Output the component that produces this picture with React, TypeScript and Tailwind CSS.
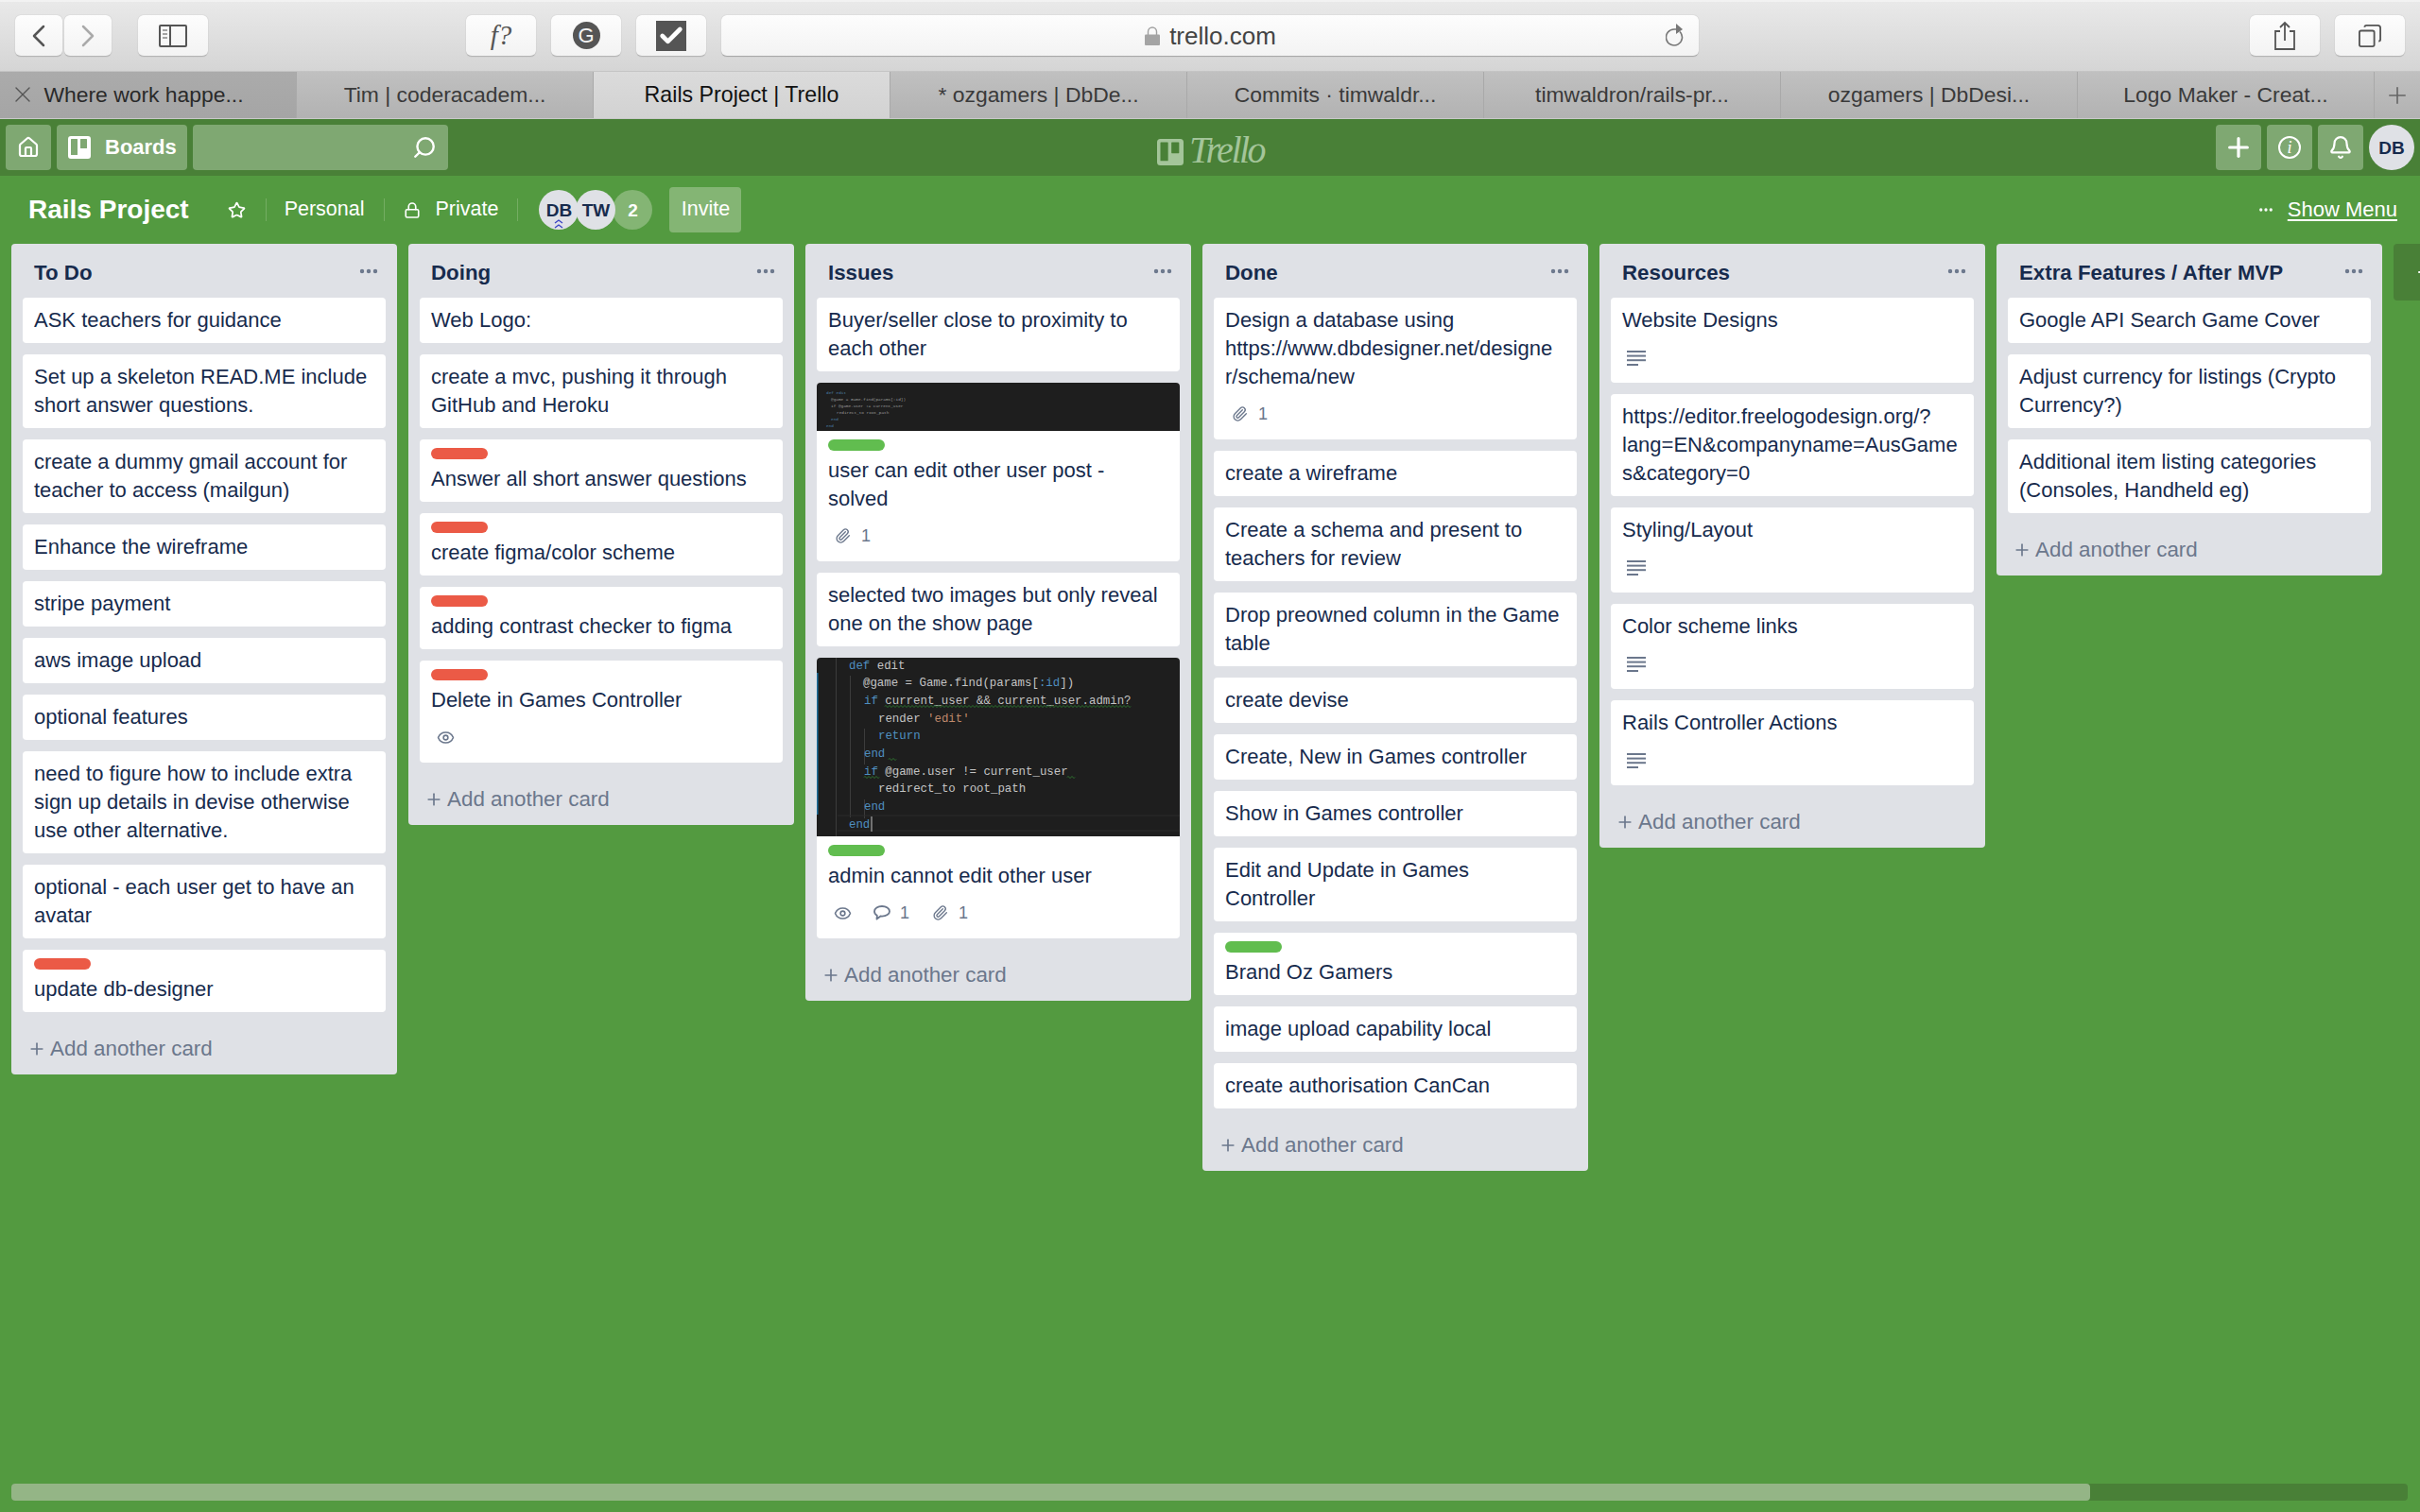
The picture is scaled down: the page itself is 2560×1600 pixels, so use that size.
import type { ReactNode } from "react";
import { Home, Search, Star, Lock, Plus, Bell, Eye, Paperclip, ChevronLeft, ChevronRight, Check, Ellipsis, X } from "lucide-react";

type CardData = {
  text: string;
  label?: "red" | "green";
  image?: "small" | "big";
  watch?: boolean;
  comments?: number;
  clips?: number;
  desc?: boolean;
};

const lists: { title: string; cards: CardData[] }[] = [
  {
    title: "To Do",
    cards: [
      { text: "ASK teachers for guidance" },
      { text: "Set up a skeleton READ.ME include short answer questions." },
      { text: "create a dummy gmail account for teacher to access (mailgun)" },
      { text: "Enhance the wireframe" },
      { text: "stripe payment" },
      { text: "aws image upload" },
      { text: "optional features" },
      { text: "need to figure how to include extra sign up details in devise otherwise use other alternative." },
      { text: "optional - each user get to have an avatar" },
      { text: "update db-designer", label: "red" },
    ],
  },
  {
    title: "Doing",
    cards: [
      { text: "Web Logo:" },
      { text: "create a mvc, pushing it through GitHub and Heroku" },
      { text: "Answer all short answer questions", label: "red" },
      { text: "create figma/color scheme", label: "red" },
      { text: "adding contrast checker to figma", label: "red" },
      { text: "Delete in Games Controller", label: "red", watch: true },
    ],
  },
  {
    title: "Issues",
    cards: [
      { text: "Buyer/seller close to proximity to each other" },
      { text: "user can edit other user post - solved", label: "green", image: "small", clips: 1 },
      { text: "selected two images but only reveal one on the show page" },
      { text: "admin cannot edit other user", label: "green", image: "big", watch: true, comments: 1, clips: 1 },
    ],
  },
  {
    title: "Done",
    cards: [
      { text: "Design a database using\nhttps://www.dbdesigner.net/designe\nr/schema/new", clips: 1 },
      { text: "create a wireframe" },
      { text: "Create a schema and present to teachers for review" },
      { text: "Drop preowned column in the Game table" },
      { text: "create devise" },
      { text: "Create, New in Games controller" },
      { text: "Show in Games controller" },
      { text: "Edit and Update in Games\nController" },
      { text: "Brand Oz Gamers", label: "green" },
      { text: "image upload capability local" },
      { text: "create authorisation CanCan" },
    ],
  },
  {
    title: "Resources",
    cards: [
      { text: "Website Designs", desc: true },
      { text: "https://editor.freelogodesign.org/?lang=EN&companyname=AusGames&category=0" },
      { text: "Styling/Layout", desc: true },
      { text: "Color scheme links", desc: true },
      { text: "Rails Controller Actions", desc: true },
    ],
  },
  {
    title: "Extra Features / After MVP",
    cards: [
      { text: "Google API Search Game Cover" },
      { text: "Adjust currency for listings (Crypto Currency?)" },
      { text: "Additional item listing categories (Consoles, Handheld eg)" },
    ],
  },
];

const tabs = [
  "Where work happe...",
  "Tim | coderacadem...",
  "Rails Project | Trello",
  "* ozgamers | DbDe...",
  "Commits · timwaldr...",
  "timwaldron/rails-pr...",
  "ozgamers | DbDesi...",
  "Logo Maker - Creat...",
];

function ToolButton({ children, className }: { children: ReactNode; className: string }) {
  return (
    <div className={`h-11 flex items-center justify-center rounded-[6px] bg-gradient-to-b from-[#fdfdfd] to-[#f3f3f3] border-b border-b-[#b4b4b4] shadow-[0_0_1px_rgba(0,0,0,0.3)] text-[#555] ${className}`}>
      {children}
    </div>
  );
}

function BoardIcon({ className }: { className: string }) {
  return (
    <svg viewBox="0 0 24 24" className={className}>
      <path fill="currentColor" fillRule="evenodd" d="M3 0h18a3 3 0 0 1 3 3v18a3 3 0 0 1-3 3H3a3 3 0 0 1-3-3V3a3 3 0 0 1 3-3zm.5 3a.5.5 0 0 0-.5.5v16a.5.5 0 0 0 .5.5h6a.5.5 0 0 0 .5-.5v-16a.5.5 0 0 0-.5-.5zm10 0a.5.5 0 0 0-.5.5v9a.5.5 0 0 0 .5.5h6a.5.5 0 0 0 .5-.5v-9a.5.5 0 0 0-.5-.5z" />
    </svg>
  );
}

function BrowserBar() {
  return (
    <div className="h-[75px] flex items-start pt-4 pl-4 pr-4 bg-gradient-to-b from-[#e9e9e9] to-[#d5d5d5] border-t-2 border-t-[#f2f2f2]">
      <ToolButton className="w-[50px] -mt-[2px]">
        <ChevronLeft className="w-10 h-11" strokeWidth={1.5} />
      </ToolButton>
      <ToolButton className="w-[50px] ml-[2px] -mt-[2px]">
        <ChevronRight className="w-10 h-11 text-[#aaa]" strokeWidth={1.5} />
      </ToolButton>
      <ToolButton className="w-[74px] ml-7 -mt-[2px]">
        <svg viewBox="0 0 30 24" className="w-[30px] h-6" fill="none" stroke="#555" strokeWidth="2">
          <rect x="1" y="1" width="28" height="22" rx="1" />
          <path d="M12 1v22" />
          <path d="M4 6h5M4 10h5M4 14h5" strokeWidth="1.6" stroke="#888" />
        </svg>
      </ToolButton>
      <ToolButton className="w-[74px] ml-[273px] -mt-[2px]">
        <span className="font-['Liberation_Serif',serif] italic text-[29px] leading-none text-[#555]">f?</span>
      </ToolButton>
      <ToolButton className="w-[74px] ml-4 -mt-[2px]">
        <span className="w-[29px] h-[29px] rounded-full bg-[#555] text-[#f4f4f4] flex items-center justify-center text-[22px] leading-none">G</span>
      </ToolButton>
      <ToolButton className="w-[74px] ml-4 -mt-[2px]">
        <span className="w-8 h-8 bg-[#555] flex items-center justify-center">
          <Check className="w-7 h-7 text-white" strokeWidth={4} />
        </span>
      </ToolButton>
      <div className="relative h-11 w-[1034px] ml-4 -mt-[2px] flex items-center justify-center rounded-[6px] bg-gradient-to-b from-[#fdfdfd] to-[#f3f3f3] border-b border-b-[#a8a8a8] shadow-[0_0_1px_rgba(0,0,0,0.3)]">
        <svg viewBox="0 0 18 20" className="w-[18px] h-5 mr-[9px]">
          <path d="M4.5 9V5.5a4.5 4.5 0 0 1 9 0V9" fill="none" stroke="#a0a0a0" strokeWidth="1.4" />
          <rect x="1" y="8.5" width="16" height="11.5" rx="1" fill="#a4a4a4" />
        </svg>
        <span className="text-[26px] leading-none text-[#444]">trello.com</span>
        <svg viewBox="0 0 20 26" className="absolute right-[15px] top-2 w-5 h-[26px]" fill="none" stroke="#777" strokeWidth="1.6">
          <path d="M15 9.5a8.5 8.5 0 1 1-6-2.5h3" />
          <path d="M11 1l7 6-7 5z" fill="#777" stroke="none" />
        </svg>
      </div>
      <ToolButton className="w-[74px] ml-auto -mt-[2px]">
        <svg viewBox="0 0 24 32" className="w-6 h-8" fill="none" stroke="#555" strokeWidth="1.8">
          <path d="M7 11H2v19h20V11h-5" />
          <path d="M12 21V2M7 7l5-5 5 5" />
        </svg>
      </ToolButton>
      <ToolButton className="w-[74px] ml-4 -mt-[2px]">
        <svg viewBox="0 0 26 26" className="w-6 h-6" fill="none" stroke="#555" strokeWidth="2">
          <rect x="1" y="7" width="17" height="18" rx="2" />
          <path d="M7 3a2 2 0 0 1 2-2h13a3 3 0 0 1 3 3v13a2 2 0 0 1-2 2" />
        </svg>
      </ToolButton>
    </div>
  );
}

function TabStrip() {
  return (
    <div className="h-[51px] flex border-b border-b-[#c8c8c8] border-t border-t-[#c4c4c4] text-[22.9px] leading-none text-[#3a3a3a]">
      {tabs.map((t, i) => (
        <div
          key={t}
          className={`w-[314px] flex items-center justify-center border-r border-r-[#a9a9a9] ${
            i === 2
              ? "bg-gradient-to-b from-[#dbdbdb] to-[#d2d2d2] text-[#111] text-[23.2px]"
              : i === 0
                ? "relative bg-gradient-to-b from-[#ababab] to-[#a5a5a5] text-[#2a2a2a] pr-[9px]"
                : "bg-gradient-to-b from-[#c0c0c0] to-[#b2b2b2]"
          }`}
        >
          {i === 0 && <X className="absolute left-[9px] top-[10px] w-[30px] h-[28px] text-[#555]" strokeWidth={1.2} />}
          {t}
        </div>
      ))}
      <div className="flex-1 flex items-center justify-center bg-gradient-to-b from-[#c0c0c0] to-[#b2b2b2]">
        <Plus className="w-7 h-7 text-[#666]" strokeWidth={1.4} />
      </div>
    </div>
  );
}

function TrelloHeader() {
  const btn = "h-12 rounded-[4px] bg-[#7fa872] flex items-center justify-center text-white";
  return (
    <div className="relative h-[60px] bg-[#498037] flex items-center pl-[6px] pr-[6px] gap-[6px]">
      <div className={`${btn} w-12`}>
        <Home className="w-6 h-6" strokeWidth={2.2} />
      </div>
      <div className={`${btn} w-[138px] gap-[15px] pl-3 justify-start`}>
        <BoardIcon className="w-6 h-6" />
        <span className="text-[22px] font-bold leading-none">Boards</span>
      </div>
      <div className={`${btn} w-[270px] justify-end pr-[12px]`}>
        <Search className="w-[26px] h-[26px] -scale-x-100" strokeWidth={2.2} />
      </div>
      <div className="absolute left-[1224px] top-[13px] flex items-center text-[#a4c59a]">
        <BoardIcon className="w-7 h-7 mt-1" />
        <span className="font-['Liberation_Serif',serif] italic text-[40px] leading-none ml-[6px] tracking-[-2.5px]">Trello</span>
      </div>
      <div className={`${btn} w-12 ml-auto`}>
        <Plus className="w-8 h-8" strokeWidth={2.4} />
      </div>
      <div className={`${btn} w-12`}>
        <span className="w-6 h-6 rounded-full border-2 border-white flex items-center justify-center font-['Liberation_Serif',serif] italic text-[18px] leading-none">i</span>
      </div>
      <div className={`${btn} w-12`}>
        <Bell className="w-[26px] h-[26px]" strokeWidth={2} />
      </div>
      <div className="w-12 h-12 rounded-full bg-[#dfe1e6] flex items-center justify-center text-[19px] font-bold text-[#172b4d] leading-none">DB</div>
    </div>
  );
}

function Divider() {
  return <div className="w-px h-6 bg-[#74ad62]" />;
}

function BoardHeader() {
  return (
    <div className="h-[72px] flex items-center pl-[30px] pr-6 text-white">
      <span className="text-[28px] font-bold leading-none">Rails Project</span>
      <Star className="w-[19px] h-[19px] ml-[41px]" strokeWidth={2.2} />
      <div className="ml-[21px]"><Divider /></div>
      <span className="text-[21.5px] leading-none ml-[19px]">Personal</span>
      <div className="ml-5"><Divider /></div>
      <Lock className="w-[18px] h-[19px] ml-5" strokeWidth={2.2} />
      <span className="text-[21.5px] leading-none ml-4">Private</span>
      <div className="ml-5"><Divider /></div>
      <div className="relative w-[42px] h-[42px] rounded-full bg-[#dfe1e6] ml-[22px] flex items-center justify-center text-[19px] font-bold text-[#172b4d] leading-none">
        DB
        <svg viewBox="0 0 12 12" className="absolute left-[15px] bottom-0 w-3 h-3" fill="none" stroke="#3a45c4" strokeWidth="1.4">
          <path d="M2 5l4-3 4 3M2 10l4-3 4 3" />
        </svg>
      </div>
      <div className="w-[42px] h-[42px] rounded-full bg-[#dfe1e6] -ml-[3px] flex items-center justify-center text-[19px] font-bold text-[#172b4d] leading-none z-10">TW</div>
      <div className="w-[42px] h-[42px] rounded-full bg-[#84b574] -ml-[3px] flex items-center justify-center text-[19px] font-bold leading-none">2</div>
      <div className="w-[76px] h-12 rounded-[4px] bg-[#84b574] ml-[18px] flex items-center justify-center text-[21.5px] leading-none">Invite</div>
      <Ellipsis className="w-[18px] h-[18px] ml-auto" strokeWidth={2.4} />
      <span className="text-[22px] leading-none underline underline-offset-[3px] ml-[14px]">Show Menu</span>
    </div>
  );
}

function SmallShot() {
  const rows: [number, string, string][] = [
    [10, "def edit", "#4c7fa8"],
    [15, "@game = Game.find(params[:id])", "#9a9a9a"],
    [15, "if @game.user != current_user", "#9a9a9a"],
    [21, "redirect_to root_path", "#9a9a9a"],
    [15, "end", "#4c7fa8"],
    [10, "end", "#4c7fa8"],
  ];
  return (
    <svg viewBox="0 0 384 51" className="block w-full h-[51px] bg-[#1e1e1e] rounded-t-[4px]">
      {rows.map(([x, s, c], i) => (
        <text key={i} x={x} y={12.2 + i * 6.95} fontFamily="'Liberation Mono', monospace" fontSize="4.4" fill={c}>
          {s}
        </text>
      ))}
    </svg>
  );
}

function BigShot() {
  const white = "#c4c4c4";
  const blue = "#4f8fc0";
  const wave = (x1: number, x2: number, y: number) => {
    let d = `M${x1} ${y}`;
    for (let x = x1; x < x2; x += 4) d += `q1 -2 2 0q1 2 2 0`;
    return <path d={d} fill="none" stroke="#2f7d32" strokeWidth="1" />;
  };
  const rows: [number, ReactNode][] = [
    [34, <tspan fill={white}><tspan fill={blue}>def</tspan> edit</tspan>],
    [49, <tspan fill={white}>@game = Game.find(params[<tspan fill={blue}>:id</tspan>])</tspan>],
    [50, <tspan fill={white}><tspan fill={blue}>if</tspan> current_user &amp;&amp; current_user.admin?</tspan>],
    [65, <tspan fill={white}>render <tspan fill="#c08a6c">'edit'</tspan></tspan>],
    [65, <tspan fill={blue}>return</tspan>],
    [50, <tspan fill={blue}>end</tspan>],
    [50, <tspan fill={white}><tspan fill={blue}>if</tspan> @game.user != current_user</tspan>],
    [65, <tspan fill={white}>redirect_to root_path</tspan>],
    [50, <tspan fill={blue}>end</tspan>],
    [34, <tspan fill={blue}>end</tspan>],
  ];
  return (
    <svg viewBox="0 0 384 189" className="block w-full h-[189px] bg-[#1e1e1e] rounded-t-[4px]">
      <rect x="0" y="16" width="1.5" height="150" fill="#1f6f9c" />
      <path d="M20.5 0v189M35.5 19v150M50.5 75v38M50.5 150v20" stroke="#3c3c3c" strokeWidth="1" />
      <path d="M22 167h362M22 183h362" stroke="#2a2a2a" strokeWidth="1" />
      {rows.map(([x, c], i) => (
        <text key={i} x={x} y={11.5 + i * 18.67} fontFamily="'Liberation Mono', monospace" fontSize="12.4">
          {c}
        </text>
      ))}
      {wave(72, 332, 51.5)}
      {wave(76, 84, 107.5)}
      {wave(50, 63, 126.5)}
      {wave(265, 272, 126.5)}
      <path d="M58 168v16" stroke="#c4c4c4" strokeWidth="1" />
    </svg>
  );
}

function ClipIcon() {
  return <Paperclip className="w-[17px] h-[18px] text-[#6b778c]" strokeWidth={1.9} />;
}

function CommentIcon() {
  return (
    <svg viewBox="0 0 18 16" className="w-[18px] h-4" fill="none" stroke="currentColor" strokeWidth="1.8" strokeLinejoin="round">
      <path d="M9 1C4.6 1 1 3.4 1 6.4c0 1.8 1.1 3.3 2.8 4.3l-.3 3.8 4-3c.5.1 1 .1 1.5.1 4.4 0 8-2.3 8-5.2S13.4 1 9 1z" />
    </svg>
  );
}

function Desc() {
  return (
    <svg viewBox="0 0 20 16" className="w-5 h-4 ml-[5px] mt-[1px]" fill="#6b778c">
      <rect x="0" y="0" width="20" height="2" />
      <rect x="0" y="4.6" width="20" height="2" />
      <rect x="0" y="9.2" width="20" height="2" />
      <rect x="0" y="14" width="12" height="2" />
    </svg>
  );
}

function Card({ c }: { c: CardData }) {
  const hasBadges = c.watch || c.comments || c.clips || c.desc;
  return (
    <div className="bg-white rounded-[4px]">
      {c.image === "small" && <SmallShot />}
      {c.image === "big" && <BigShot />}
      <div className="px-3 py-[9px]">
        {c.label && (
          <div className={`w-[60px] h-3 rounded-[6px] mb-[6px] ${c.label === "red" ? "bg-[#eb5a46]" : "bg-[#61bd4f]"}`} />
        )}
        <div className="text-[22px] leading-[30px] text-[#172b4d] break-words whitespace-pre-line">{c.text}</div>
        {hasBadges && (
          <div className="h-[42px] flex items-center pt-[6px] text-[18px] text-[#6b778c] leading-none">
            {c.desc && <Desc />}
            {c.watch && <Eye className="w-[19px] h-[19px] ml-[6px] mr-[23px]" strokeWidth={2} />}
            {!!c.comments && (
              <>
                <CommentIcon />
                <span className="ml-[10px] mr-[24px]">{c.comments}</span>
              </>
            )}
            {!!c.clips && (
              <>
                <span className={c.watch ? "" : "ml-[7px]"}>
                  <ClipIcon />
                </span>
                <span className="ml-[11px]">{c.clips}</span>
              </>
            )}
          </div>
        )}
      </div>
    </div>
  );
}

function List({ title, cards }: { title: string; cards: CardData[] }) {
  return (
    <div className="w-[408px] shrink-0 bg-[#dfe1e6] rounded-[4px]">
      <div className="h-[57px] flex items-center justify-between pl-6 pr-[18px] pt-[6px]">
        <span className="text-[22.3px] font-bold text-[#172b4d] leading-none">{title}</span>
        <Ellipsis className="w-6 h-6 text-[#6b778c] -mt-[6px]" strokeWidth={2.4} />
      </div>
      <div className="flex flex-col gap-3 px-3">
        {cards.map((c) => (
          <Card key={c.text} c={c} />
        ))}
      </div>
      <div className="h-[66px] pt-[12px] flex items-center pl-[17px] text-[22.4px] text-[#6b778c] leading-none">
        <Plus className="w-[20px] h-[20px] mr-1" strokeWidth={2} />
        Add another card
      </div>
    </div>
  );
}

export default function App() {
  return (
    <div className="w-[2560px] h-[1600px] flex flex-col overflow-hidden bg-[#539a40] font-['Liberation_Sans',Arial,sans-serif]">
      <BrowserBar />
      <TabStrip />
      <TrelloHeader />
      <BoardHeader />
      <div className="flex-1 min-h-0 flex items-start gap-3 pl-3 overflow-hidden">
        {lists.map((l) => (
          <List key={l.title} title={l.title} cards={l.cards} />
        ))}
        <div className="w-[272px] shrink-0 h-[60px] rounded-[4px] bg-[#498037] text-white flex items-center pl-[22px]">
          <Plus className="w-6 h-6" />
        </div>
      </div>
      <div className="h-[18px] mx-3 mb-3 rounded-[4px] bg-[#498037] w-[2535px]">
        <div className="h-full w-[2199px] rounded-[4px] bg-[#94b586]" />
      </div>
    </div>
  );
}
